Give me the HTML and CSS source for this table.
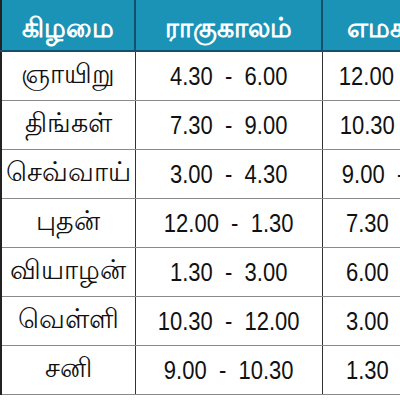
FILE: index.html
```html
<!DOCTYPE html>
<html lang="ta">
<head>
<meta charset="utf-8">
<link rel="stylesheet" href="styles.css">
</head>
<body>
<div class="frame">
<table class="times">
<colgroup><col class="c1"><col class="c2"><col class="c3"></colgroup>
<thead>
<tr><th>கிழமை</th><th>ராகுகாலம்</th><th class="last">எமகண்டம்</th></tr>
</thead>
<tbody>
<tr><td class="day">ஞாயிறு</td><td class="num"><span>4.30  -  6.00</span></td><td class="num em"><span>12.00  -  1.30</span></td></tr>
<tr><td class="day">திங்கள்</td><td class="num"><span>7.30  -  9.00</span></td><td class="num em"><span>10.30  -  12.00</span></td></tr>
<tr><td class="day">செவ்வாய்</td><td class="num"><span>3.00  -  4.30</span></td><td class="num em mid"><span>9.00  -  10.30</span></td></tr>
<tr><td class="day">புதன்</td><td class="num"><span>12.00  -  1.30</span></td><td class="num em one"><span>7.30  -  9.00</span></td></tr>
<tr><td class="day">வியாழன்</td><td class="num"><span>1.30  -  3.00</span></td><td class="num em one"><span>6.00  -  7.30</span></td></tr>
<tr><td class="day">வெள்ளி</td><td class="num"><span>10.30  -  12.00</span></td><td class="num em one"><span>3.00  -  4.30</span></td></tr>
<tr><td class="day">சனி</td><td class="num"><span>9.00  -  10.30</span></td><td class="num em one"><span>1.30  -  3.00</span></td></tr>
</tbody>
</table>
</div>
</body>
</html>
```
FILE: styles.css
```css
html, body {
  margin: 0;
  padding: 0;
  background: #ffffff;
}
.frame {
  width: 400px;
  height: 400px;
  overflow: hidden;
}
.times {
  border-collapse: collapse;
  table-layout: fixed;
  width: 511px;
  font-family: "Liberation Sans", Arial, sans-serif;
  color: #111;
}
.c1 { width: 134px; }
.c2 { width: 187px; }
.c3 { width: 190px; }
.times th {
  background: #1b93b7;
  color: #fff;
  font-weight: bold;
  font-size: 27px;
  height: 51px;
  padding: 10px 0 0;
  box-sizing: border-box;
  border-right: 2px solid #12506e;
  border-bottom: 2px solid #12506e;
  text-align: center;
  white-space: nowrap;
}
.times th:first-child { border-left: 2px solid #222; }
.times th.last {
  text-align: left;
  padding-left: 24px;
}
.times td {
  height: 48px;
  padding: 0;
  text-align: center;
  border-bottom: 1.5px solid #8a8a8a;
  border-right: 1.5px solid #333;
  white-space: nowrap;
}
.times td:first-child { border-left: 2px solid #222; }
.day {
  font-size: 27px;
}
.num {
  font-size: 25px;
  white-space: pre;
}
.num span {
  display: inline-block;
  margin: 0 -9px;
  transform: scaleX(0.88);
  white-space: pre;
}
.times td.em {
  text-align: left;
  padding-left: 16px;
}
.times td.em.mid { padding-left: 19px; }
.times td.em.one { padding-left: 24px; }
```
